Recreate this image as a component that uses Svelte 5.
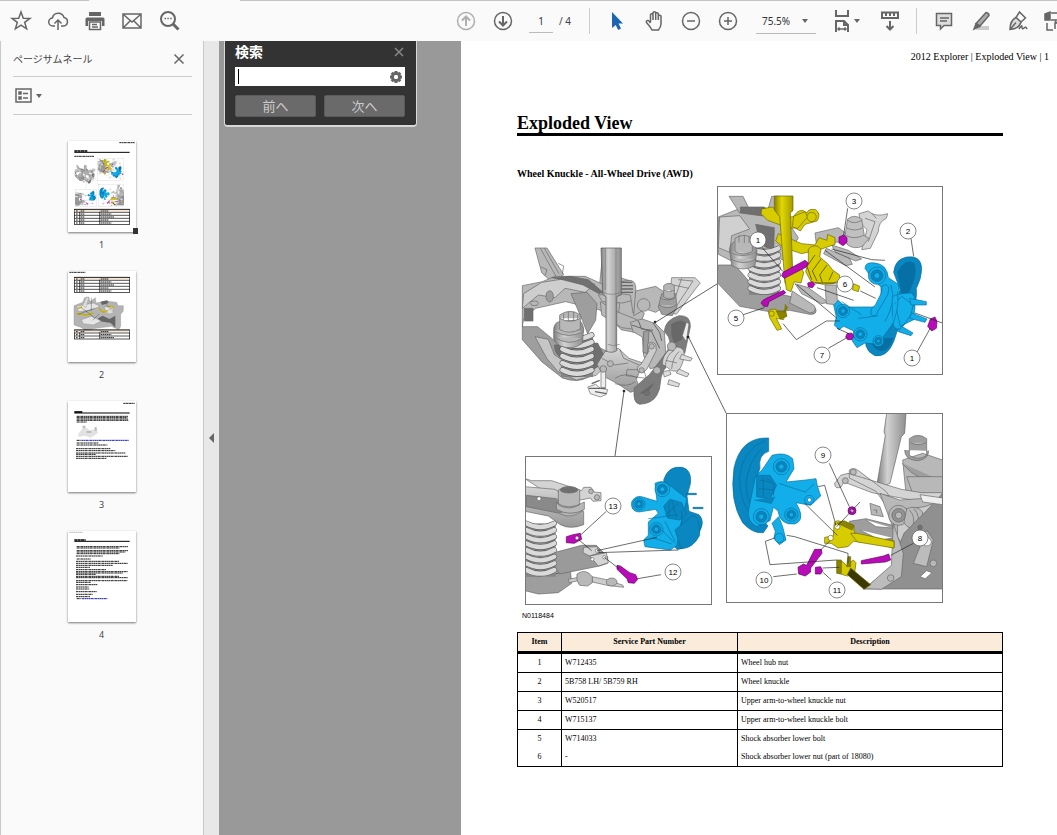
<script>
	let page = '1';
	let zoom = '75.5%';
	let query = '';

	const parts = [
		['1', 'W712435', 'Wheel hub nut'],
		['2', '5B758 LH/ 5B759 RH', 'Wheel knuckle'],
		['3', 'W520517', 'Upper arm-to-wheel knuckle nut'],
		['4', 'W715137', 'Upper arm-to-wheel knuckle bolt'],
		['5', 'W714033', 'Shock absorber lower bolt'],
		['6', '-', 'Shock absorber lower nut (part of 18080)']
	];

	// callout bubbles, in figure units
	const callouts = [
		{ n: '3', x: 339, y: 16 },
		{ n: '2', x: 393, y: 46 },
		{ n: '1', x: 243, y: 55 },
		{ n: '6', x: 330, y: 99 },
		{ n: '5', x: 221, y: 133 },
		{ n: '7', x: 307, y: 170 },
		{ n: '1', x: 397, y: 173 },
		{ n: '9', x: 308, y: 270 },
		{ n: '8', x: 405, y: 353 },
		{ n: '10', x: 249, y: 395 },
		{ n: '11', x: 322, y: 405 },
		{ n: '13', x: 98, y: 321 },
		{ n: '12', x: 158, y: 387 }
	];

	// text rows of the thumbnails: y, x, width, colour
	const rows3 = [
		[46, 26, 154], [50, 26, 152], [54, 26, 154], [58, 26, 156], [63, 26, 30],
		[118, 26, 12], [118, 40, 142, '#1a1ad0'], [126, 26, 66], [132, 26, 92],
		[143, 24, 104], [149, 24, 118], [156, 24, 148], [160, 24, 60], [166, 24, 156], [172, 24, 92]
	];
	const rows4 = [
		[47, 26, 154], [51, 26, 128], [59, 26, 154], [63, 26, 146], [68, 26, 128], [75, 24, 80],
		[84, 26, 42], [91, 24, 130], [97, 24, 156], [103, 24, 110], [109, 24, 42], [116, 24, 90],
		[122, 24, 156], [126, 24, 140], [130, 24, 60], [136, 24, 130], [140, 24, 156], [149, 24, 154],
		[154, 24, 44], [161, 24, 64], [168, 24, 38], [174, 24, 40], [182, 24, 62], [190, 24, 50],
		[197, 24, 42], [203, 26, 14], [203, 42, 76, '#1a1ad0']
	];
</script>

{#snippet spring(x, y, w, n, step)}
	<rect x={x - 4} {y} width={w + 8} height={n * step} fill="#858585" stroke="none" />
	{#each Array(n) as _, i}
		<path
			d="M{x} {y + i * step} q{w / 2} {step * 1.1} {w} 0"
			fill="none" stroke="#555" stroke-width={step * 0.8} stroke-linecap="round" />
		<path
			d="M{x} {y + i * step} q{w / 2} {step * 1.1} {w} 0"
			fill="none" stroke="#dadada" stroke-width={step * 0.64} stroke-linecap="round" />
	{/each}
{/snippet}

{#snippet bushing(x, y, r)}
	<circle cx={x} cy={y} {r} />
	<circle cx={x} cy={y} r={r * 0.68} class="shade" />
	<circle cx={x} cy={y} r={r * 0.34} />
{/snippet}

{#snippet thumbTable(y, count)}
	<rect x="19" {y} width="166" height={count * 9} fill="none" stroke="#000" stroke-width="2" />
	<path d="M35 {y}v{count * 9}M95 {y}v{count * 9}" stroke="#000" stroke-width="2" />
	<rect x="20" y={y + 1} width="164" height="6" fill="#f6e6d6" />
	{#each Array(count) as _, i}
		<path d="M19 {y + i * 9}H185" stroke="#000" stroke-width="2" />
		<path d="M24 {y + i * 9 + 5}h6M38 {y + i * 9 + 5}h12M98 {y + i * 9 + 5}h{24 + (i % 3) * 8}" stroke="#222" stroke-width="3" stroke-dasharray="5 1" />
	{/each}
{/snippet}

{#snippet lines(rows)}
	{#each rows as [y, x, w, colour]}
		<path d="M{x} {y}h{w}" stroke={colour ?? '#222'} stroke-width="3" stroke-dasharray="7 1 4 1" />
	{/each}
{/snippet}

<div class="app">
	<div class="tabs"><span></span><span></span></div>
	<header class="toolbar">
		<div class="tools files">
			<button aria-label="Star">
				<svg viewBox="0 0 24 24"><path d="M12 3l2.3 6.2 6.7.2-5.3 4 1.9 6.4-5.6-3.7-5.6 3.7 1.9-6.4-5.3-4 6.7-.2z" /></svg>
			</button>
			<button aria-label="Upload">
				<svg viewBox="0 0 24 24"><path d="M9 17H7a4 4 0 01-.6-8A6 6 0 0118 8.500a4.300 4.300 0 01-.5 8.500H15M12 21v-9.500M8.500 14.500l3.500-3.500 3.500 3.500" /></svg>
			</button>
			<button aria-label="Print">
				<svg viewBox="0 0 24 24"><path class="fill" stroke="none" d="M6 3h12v4H6zM4 8.500h16q1.500 0 1.500 1.500v7H19v-5H5v5H2.500v-7q0-1.500 1.500-1.500z" /><path d="M6.500 13h11v7.500h-11zM9 15.500h5M9 18h6" /></svg>
			</button>
			<button aria-label="Mail">
				<svg viewBox="0 0 24 24"><path d="M3 5h18v14H3zM4 6l8 7 8-7M4 18l6-6M20 18l-6-6" /></svg>
			</button>
			<button aria-label="Search">
				<svg viewBox="0 0 24 24"><circle cx="11" cy="10" r="7" stroke-width="2" /><path stroke-width="3" d="M16 15l5.500 5.500" /><path d="M7.500 9.500H9M10.300 9.500h1.500M13.200 9.500h1.500" /></svg>
			</button>
		</div>
		<div class="tools view">
			<button class="dim" aria-label="Previous page">
				<svg viewBox="0 0 24 24"><circle cx="12" cy="12" r="8.500" /><path stroke-width="2" d="M12 17V8M8 11.500l4-4 4 4" /></svg>
			</button>
			<button aria-label="Next page">
				<svg viewBox="0 0 24 24"><circle cx="12" cy="12" r="8.500" /><path stroke-width="2" d="M12 7v9M8 12.500l4 4 4-4" /></svg>
			</button>
			<input class="page-no" aria-label="Page number" bind:value={page} />
			<span class="total">/ 4</span>
			<span class="rule"></span>
			<button aria-label="Select">
				<svg viewBox="0 0 24 24"><path fill="#1c66b0" stroke="none" d="M7 3v16l3.700-3 2.500 5 2.800-1.400-2.500-5H18z" /></svg>
			</button>
			<button aria-label="Hand">
				<svg viewBox="0 0 24 24"><path d="M8.500 13V5.500q1.300-1.500 2.500 0V11M11 10V3.500q1.400-1.500 2.700 0V11M13.700 10V4.500q1.300-1.400 2.600 0V11M16.300 11V7q1.400-1.400 2.700 0v8q-.3 3.500-2.500 6H10q-1.500-3-5.500-7.500c-1-2 1.500-2.500 2.500-1.500l1.500 2" /></svg>
			</button>
			<button aria-label="Zoom out">
				<svg viewBox="0 0 24 24"><circle cx="12" cy="12" r="8.500" /><path d="M8 12h8" /></svg>
			</button>
			<button aria-label="Zoom in">
				<svg viewBox="0 0 24 24"><circle cx="12" cy="12" r="8.500" /><path d="M8 12h8M12 8v8" /></svg>
			</button>
			<div class="zoom">
				<select aria-label="Zoom level" bind:value={zoom}>
					<option>75.5%</option>
					<option>100%</option>
				</select>
				<i class="caret"></i>
			</div>
			<button class="wide" aria-label="Page fit">
				<svg viewBox="0 0 24 24"><path stroke-width="2" d="M6 1v6h12V1M6 23V12h8l4 4v7M14 12v4h4" /><path d="M8 20h8M9.500 18.500L8 20l1.500 1.500M14.500 18.500L16 20l-1.500 1.500" /></svg>
				<i class="caret"></i>
			</button>
			<button aria-label="Scroll mode">
				<svg viewBox="0 0 24 24"><path stroke-width="2" d="M4 3.500h16V9H4zM8 4v3M12 4v3M16 4v3" /><path stroke-width="2" d="M12 12v8M8.500 17l3.500 3.500 3.500-3.500" /></svg>
			</button>
			<span class="rule"></span>
			<button aria-label="Comment">
				<svg viewBox="0 0 24 24"><path fill="#ddd" d="M4.500 4.500h15v12H12L8.500 20v-3.500h-4z" /><path d="M8 9h9M8 12h7" /></svg>
			</button>
			<button aria-label="Highlight">
				<svg viewBox="0 0 24 24"><path fill="#ccc" stroke="none" d="M10 17h10v4H7z" /><path fill="#aaa" d="M17 3.500q3 .5 3 3L11 17l-4-2.500z" /><path class="fill" d="M7 15l3.500 2.500L5 20z" /></svg>
			</button>
			<button aria-label="Sign">
				<svg viewBox="0 0 24 24"><path fill="#ddd" d="M4 20.500c0-6 2-10 6-12l5 4.500c-1 4-5 7-11 7.500zM4 20.500l6-7" /><path d="M10 8.500L13.500 3l6 6-4.500 4" /><path d="M13 20q3-5 3-2t2 1 3 1" /></svg>
			</button>
			<button aria-label="Convert">
				<svg viewBox="0 0 24 24"><path class="fill" d="M2 5l5-2v8H2z" /><path d="M8 4h8v7H8M4 14v7h6M12 12l5 5M12 20v-6h6" /></svg>
			</button>
		</div>
	</header>

	<div class="body">
		<aside>
			<div class="side-head">
				<h2>ページサムネール</h2>
				<button aria-label="閉じる"><svg viewBox="0 0 12 12"><path d="M1.500 1.500l9 9M10.500 1.500l-9 9" /></svg></button>
			</div>
			<div class="side-options">
				<button aria-label="オプション">
					<svg viewBox="0 0 17 15"><path d="M1 1h15v13H1zM8 5.500h5M8 10h5" /><path class="fill" d="M4 4h2v2H4zM4 9h2v2H4z" /></svg>
					<i class="caret"></i>
				</button>
			</div>
			<nav>
				<a href="#page-1">
					<span class="sheet current">
						<svg viewBox="0 0 204 273">
							<path d="M154 5h46M19 46h60" stroke="#222" stroke-width="3" stroke-dasharray="7 1 4 1" />
							<path d="M19 30h40" stroke="#000" stroke-width="5" stroke-dasharray="9 1" />
							<path d="M19 34H185" stroke="#000" stroke-width="3" />
							<use href="#suspension" transform="translate(18 51) scale(.35 .35)" />
							{@render thumbTable(205, 5)}
						</svg>
					</span>
					1
				</a>
				<a href="#page-2">
					<span class="sheet">
						<svg viewBox="0 0 204 273">
							<path d="M4 4h48" stroke="#222" stroke-width="3" stroke-dasharray="7 1 4 1" />
							{@render thumbTable(19, 5)}
							<path fill="#b4b4b4" stroke="#888" d="M18 104l26-10 6-14 12-2 4 14 16-12 2 16 28-6 34 4 4 10 16 0v16l-8 10v36l-6 10-22-10-46 6-34 8-8-10-24-8z" />
							<path fill="#666" d="M90 142l14-8 20 10 18-10v36l-14-14-36-6zM98 92l20-4 4 8-20 6z" />
							<path fill="#e6e6e6" stroke="#777" d="M26 106l50-10 20 10-24 10-40 6zM40 146l30-10 30 14-24 12-30-4zM108 108l28 0v14l-20 6z" />
							<path fill="#ddd" stroke="#888" d="M44 104l12-26 6 2-8 30zM118 118l14-6 4 14-16 4z" />
							<path fill="none" stroke="#c5b100" stroke-width="4" d="M24 128l34 4 18-6M92 112l14 12 12-6M120 104l18 6M30 112l12-4" />
							<path stroke="#222" fill="none" d="M30 130l50-18M40 110l40 30M70 80v40M94 128l-20 20M110 96l20 20" />
							{@render thumbTable(177, 3)}
						</svg>
					</span>
					2
				</a>
				<a href="#page-3">
					<span class="sheet">
						<svg viewBox="0 0 204 273">
							<path d="M166 7h34" stroke="#222" stroke-width="3" stroke-dasharray="7 1" />
							<path d="M19 33h24" stroke="#000" stroke-width="5" />
							<path d="M19 36H185" stroke="#000" stroke-width="3" />
							<path fill="#e2e2e2" d="M30 100l14-18 12-2 8 8 22-4 4 12-12 8-10 6-18-6-18 4z" />
							<path fill="#bbb" d="M44 74h8v8h-8zM80 78h6v12h-6zM56 90h14v6H56z" />
							{@render lines(rows3)}
						</svg>
					</span>
					3
				</a>
				<a href="#page-4">
					<span class="sheet">
						<svg viewBox="0 0 204 273">
							<path d="M4 4h40" stroke="#999" stroke-width="2" stroke-dasharray="5 1" />
							<path d="M19 27h34" stroke="#000" stroke-width="5" stroke-dasharray="9 1" />
							<path d="M19 31H185" stroke="#000" stroke-width="3" />
							{@render lines(rows4)}
						</svg>
					</span>
					4
				</a>
			</nav>
		</aside>
		<button class="collapse" aria-label="パネルを閉じる"><i></i></button>

		<div class="gutter">
			<form class="find">
				<div class="find-head">
					<label for="find">検索</label>
					<button type="button" aria-label="閉じる"><svg viewBox="0 0 12 12"><path d="M2 2l8 8M10 2l-8 8" /></svg></button>
				</div>
				<div class="find-box">
					<i class="cursor"></i>
					<input id="find" bind:value={query} />
					<svg viewBox="0 0 14 14"><circle cx="7" cy="7" r="3.500" fill="none" stroke="#666" stroke-width="3" /><path stroke="#666" stroke-width="3" d="M7 1v2M7 11v2M1 7h2M11 7h2M2.700 2.700l1.500 1.500M9.800 9.800l1.500 1.500M2.700 11.300l1.500-1.500M9.800 4.200l1.500-1.500" /><circle cx="7" cy="7" r="2" fill="#fff" /></svg>
				</div>
				<div class="find-nav">
					<button type="button">前へ</button>
					<button type="button">次へ</button>
				</div>
			</form>
		</div>

		<main id="page-1">
			<p class="running">2012 Explorer | Exploded View | 1</p>
			<h1>Exploded View</h1>
			<h3>Wheel Knuckle - All-Wheel Drive (AWD)</h3>

			<figure>
				<svg class="drawing" viewBox="0 0 430 422" role="img" aria-label="Wheel knuckle exploded view">
					<defs>
						<linearGradient id="tube"><stop offset="0" stop-color="#808080" /><stop offset=".35" stop-color="#d2d2d2" /><stop offset="1" stop-color="#8e8e8e" /></linearGradient>
						<linearGradient id="gold"><stop offset="0" stop-color="#8a8200" /><stop offset=".4" stop-color="#e2d800" /><stop offset="1" stop-color="#a29a00" /></linearGradient>
						<linearGradient id="arm" x2="0" y2="1"><stop offset="0" stop-color="#d4d4d4" /><stop offset="1" stop-color="#989898" /></linearGradient>
						<clipPath id="clipTop"><rect x="9" y="6" width="673" height="561" /></clipPath>
						<clipPath id="clipRight"><rect x="20" y="11" width="648" height="566" /></clipPath>
						<clipPath id="clipLeft"><rect x="31" y="20" width="558" height="445" /></clipPath>
					</defs>
					<g id="suspension">
						<!-- assembled view -->
						<g transform="translate(0 50) scale(.33333)">
							<g class="grey">
								<path d="M60 39h36l50 80-36 22-30-28z" />
								<path d="M76 40l48 86M88 40l44 76M78 96l18 8-6 18M130 85l16 8-4 24" fill="none" />
								<path d="M22 275h46l60 50 120 10 60 30-90 62q-30 18-76 2L80 380 22 314z" class="mid" />
								<path d="M60 305l40 8 18 46 50 34 72 6 44-20-40 42-60 14-54-24-34-40z" fill="#c6c6c6" />
								<path d="M262 70l60 60 24 8 14 36-4 40 32 20-20 60-50-10-70-80z" />
								<path d="M22 152l60-12 38-16 90 0 50 22 54 60-6 58-56-40-100-24-90 20-36 32-4 24H22z" />
								<path d="M80 142l90-14 70 20-30 24-60-12-30 28-50-8-48 40 4-44z" fill="#cecece" />
								<path d="M110 128l56-4 54 10 44 38-12 4-48-26-62-16z" class="dark" />
								<path d="M168 176l48-4 30 34-4 50-24 40-16-40z" class="mid" />
								<ellipse cx="104" cy="184" rx="11" ry="17" class="mid" />
								<path d="M28 220h26v38H28z" class="dark" />
								<ellipse cx="58" cy="205" rx="12" ry="7" />
								<path d="M118 330q0 34 30 40l74 40q36-14 44-50l-18-36z" class="dark" />
								{@render spring(142, 300, 88, 6, 21)}
								<path d="M116 285q0-22 20-26l54-4q14 6 16 28l-4 42q-30 22-66 8-20-12-20-24z" fill="url(#tube)" />
								<path d="M134 240q32-22 62 0v42q-30 18-62 2zM116 286q44 30 90 2M120 306q40 30 82 4M134 250q32 18 62 0" />
								<path d="M146 236v18M160 230v28M176 230v28M188 240v14" />
								<path d="M256 200l50 30 60 24 24 20-10 12-60-8-60-38zM250 180l40-4 66-4 6 22-40 10-60-4z" />
								<path d="M318 140l22-4q20-2 22 20l4 70-12 8-8-54-30-4z" />
								<path d="M320 142h32M320 152h34M320 162h34M320 172h34" stroke-width="4" />
								<path d="M362 168l60-14 30 20 10 32-40 26-30-10-36 20z" />
								<circle cx="386" cy="210" r="19" />
								<path d="M470 128l70 0 16 16-16 20-56 74-22-8 16-36-12-30z" fill="#d4d4d4" />
								<path d="M490 134l44 4-50 76M476 150l46 10M500 130l-22 66" fill="none" />
								<path d="M440 176h42l4 40-14 26-32-4-10-22z" class="mid" />
								<path d="M446 152q16-14 32 0v34q-16 14-32 0zM434 188q24 14 48 0M432 210q26 16 52 0M448 166q14 8 30 0" fill="#b4b4b4" />
								<path d="M346 262l36-10 40 14 26 26 4 60-20 40-26 10-20-40-4-56-28-16z" />
								<path d="M350 270l60 20 24 50M370 258l10 24 34 4M386 296l12 60M414 264l20 28 6 26" fill="none" stroke-width="3" />
								<path d="M386 290l16-4-4 70-14-4z" class="mid" />
								<path d="M270 350l40-10 32 30 42 14-20 50 12 28-30 10-38-26-42-22-20-36z" fill="url(#arm)" />
								<path d="M260 370l40 20 40-6M300 430q30-20 66-2M300 446q40 12 60-6M314 342l12 28 46 20M336 404h50l8 26-60-8z" fill="none" />
								<circle cx="286" cy="386" r="9" />
								<path d="M258 39h61v140l-14 6v162q-16 10-32 0v-162l-10-6z" fill="url(#tube)" stroke="#555" />
								<path d="M271 39v126M303 39v296M264 172q26 12 52 0M278 328q16 8 36 0" fill="none" stroke="#777" />
								<path d="M448 290q2-36 44-48 36-2 34 34l-16 76-14 20-30 8q-28 26-30 64 0 18-10 36-14 26-52 28-22-4-16-50l46-40 50-66q24-34-6-62z" fill="#7c7c7c" />
								<path d="M470 268q30-18 42-4 0 30-12 50l-22 10-8-24zM376 474q22 6 40-30" fill="#686868" />
								<path d="M502 302l12-40 8 4-8 54z" fill="#eee" />
								<path d="M466 342q24-14 40 4 6 26-14 60-18 8-34-8l-16-10q0-28 24-46z" fill="#d4d4d4" />
								<path d="M478 346q-26 12-28 56M492 350q-20 18-22 52M452 376l34 8" fill="none" />
								<path d="M500 358l32 12-6 8-32-6zM492 402l30 14-6 10-32-12zM462 434l32 12-4 10-32-8zM444 410l20-4 4 12-20 8z" fill="#ddd" />
								<path d="M398 328q12-12 24 0l2 18-28 56q-14 18-28 6-4-14 10-20l24-40z" fill="#ccc" />
								<circle cx="410" cy="334" r="8" /><circle cx="380" cy="406" r="8" /><circle cx="470" cy="334" r="13" /><circle cx="426" cy="406" r="11" /><circle cx="396" cy="474" r="8" class="dark" />
								<path d="M258 402h14v56h-14zM218 456l24-8 14 12 22 4-4 14-18 8-30-10z" fill="#eee" />
								<circle cx="265" cy="402" r="10" />
								<path d="M230 446l24-10M222 460h50M240 470l34 6" stroke-width="4" />
							</g>
						</g>
						<g class="lead">
							<path d="M141 137L202 99M173 151L211 228M109 206L100 271" />
							<circle cx="140" cy="137" r="1" /><circle cx="173" cy="152" r="1" /><circle cx="109" cy="206" r="1" />
						</g>

						<!-- upper right box -->
						<g transform="translate(200) scale(.33333)" clip-path="url(#clipTop)">
							<rect x="9" y="6" width="673" height="561" fill="#fff" stroke="none" />
							<g class="grey">
								<path d="M10 240h50l60 70 130 30 52 30q6 20-18 18l-60-12-50 6-100-18-70-74z" class="mid" />
								<path d="M232 318l66 44q10 20-14 22l-60-30zM240 296l40 12 60 44-20 4-60-30z" />
								<path d="M10 96l60-24 80-4 60 30 40 60-40 70-60-30-60-10-40 40-40-20z" />
								<path d="M42 34h42l20 40-30 10zM170 34l20 0-14 60-20-10z" />
								<path d="M14 96l60-4 30 40-54 20-6 50-34-14z" fill="#d0d0d0" />
								<path d="M76 66h70l40 30-50-4-60-8zM122 118l56 10-2 70-40-20z" class="dark" />
								{@render spring(106, 190, 84, 7, 20)}
								<path d="M44 196q0-24 18-26l50-2 14 28-6 46q-36 20-70 0z" fill="url(#tube)" />
								<path d="M60 160q26-18 52 0v40q-26 14-52 0zM44 200q38 24 80 0M48 222q38 22 74 0M72 152v20M88 150v24M102 154v20" />
								<path d="M300 144l70-16 24 18-10 24-80 6zM334 190l70 30 8 18-20 4-66-36zM350 180l50 16 40 26-18 6-60-26zM330 300l34 0 4 60-34-4z" />
								<path d="M432 86l28-8q20 20 58 8l-4 14q-24 10-24 40l-24 50-26 4 16-60-20-20z" fill="#d4d4d4" />
								<path d="M450 100l30 10-20 60M470 84l14 16" fill="none" />
								<path d="M388 162l10-60q20-16 42 0l8 50 14 8-20 24q-24 10-44-4z" fill="#c0c0c0" />
								<path d="M398 106q20 14 42 0M394 128q24 14 50 0M390 150q28 16 58 0" fill="none" />
							</g>
							<g class="gold">
								<path d="M140 72l30-6 60 30 40-16 8 16-30 34-30-2-60-22-20-20zM236 94q20-30 40-10 4-14 26-10 18 14 4 34l-36 10-14 20-24-14z" />
								<path d="M190 146l70 30 40 4 12-22 24 8 2-18 22 10v20l-40 14-60 14-54-18-24-20z" />
								<circle cx="290" cy="96" r="14" />
								<path d="M178 33h56v44l-8 6 8 196-10 24-14-8-16-200-16-20z" fill="url(#gold)" />
								<path d="M280 192q20-20 38 0l-4 24 24 20 16 20 20 14 0 16-20 10-30 2-36-8-16-30 8-30z" />
								<path d="M300 210l-24 34 14 40M318 222l-26 36 14 30M336 240l-22 30 8 22M354 260l-12 26" fill="none" stroke-width="3" />
								<path d="M210 280l18-30 30-6 8 20-8 30-20-4-10 30-14-6z" />
								<path d="M416 296l18 8-4 16-18-6zM160 378q16-12 30 0l20 4-4 22-22-4 16 32-14 4-22-38z" />
								<circle cx="170" cy="386" r="8" />
								<path d="M184 378h28l4 16-20 8zM210 358l8 10-12 16" class="shade" />
							</g>
							<g class="blue">
								<path d="M536 262q4-40 40-46 42-6 44 34 0 30-16 60 4 40-18 90l-40 40-10 30q-20 48-56 42-44-20-20-76l60-60 36-60z" class="shade" />
								<path d="M548 260q26-42 50-24 10 32-14 80l-20 30zM470 462q0 30 30 36 24-4 34-40" class="deep" />
								<path d="M450 250q0-20 30-16 36 4 40 44l30 20 10 60-20 50-30 40-20 30-40-4-24 14-14-20 4-30-30-14-14 10-14-14 6-24-8-36 14-14 22 20 84 0 22-10v-50l-26-24z" />
								{@render bushing(486, 272, 26)}
								{@render bushing(436, 448, 20)}
								{@render bushing(384, 378, 20)}
								{@render bushing(490, 468, 16)}
								<path d="M500 304q16-12 22 6l-4 20-30 50q-6 22-20 8-2-20 12-26l20-40zM530 336q20-12 60-12l10 14-12 50-30 44q-24 4-24-20zM540 354l20-20 40 30-4 40-40 20z" />
								<path d="M584 340l50 10v10l-46 0zM590 384l46 18-6 10-46-12zM560 424l34 20-6 8-38-12zM528 300q16 50-18 110M548 320q6 60-22 110M430 400l60-8M380 350l60 40" />
							</g>
							<g class="bolt">
								<path d="M204 262l14-8 52-28 10 8-6 12-54 28-12 6-8-8zM144 346l10-6 52-24 6 8-50 26-4 14-12 0-8-10zM278 294l14-4 8 8-8 10-12-2zM372 156l14-6 10 8 0 14-12 10-12-8zM646 402l14-6 6 14-2 20-14 8-12-14zM396 446l14-2 6 10-6 10-12 0-6-8z" />
							</g>
							<g class="lead long">
								<path d="M398 70l-12 80M140 186l64 74M76 392l72-24M300 294h72M340 490l56-32M604 505l42-76M588 160l8 54M330 196l150 110M350 192l120 32 40 2M246 300l120 100M306 308l110 38M436 318l46 22M600 384l82 30M204 416l40 48 90-56 40 0M366 430l36 16" />
							</g>
						</g>

						<!-- lower right box -->
						<g transform="translate(205 225) scale(.33333)" clip-path="url(#clipRight)">
							<rect x="20" y="11" width="648" height="566" fill="#fff" stroke="none" />
							<g class="grey">
								<path d="M500 10h58l-4 60-10 10-34 140q-20 12-38-4l24-140-4-10z" fill="url(#tube)" />
								<path d="M548 150l60-20 60 20v120l-110-20z" />
								<path d="M568 86q26-20 52 0v50q-26 18-52 0zM554 120q0 30 38 32 34-4 34-30M546 160q50 60 122 54M564 200q40 40 104 40" class="mid" />
								<path d="M560 200h108v50l-90 0zM572 98q20 12 46 0" />
								<path d="M362 196l22-6 40 12 120 36 60 10 62 0v24l-80 0-130-24-84-32-10 16q-18 6-18-12zM388 180q14-10 30 4l80 60 40 60-20 10-50-70-80-40z" fill="#d4d4d4" />
								<circle cx="376" cy="212" r="9" /><circle cx="400" cy="186" r="9" />
								<path d="M450 280l30 10 10 30-36-6zM460 300h10v10M480 250l60 20 60-4 68 0v200l-68 70-74-60-6-120z" />
								<path d="M534 300l80-10 54-20v90l-40 60-10 50-40-20-46-70z" fill="#ccc" />
								{@render bushing(536, 316, 30)}
								<path d="M560 296q30-12 48 10 0 34-20 52-24 0-36-20z" />
								<path d="M568 300q20 20 10 50M582 296q20 20 10 56" fill="none" />
								<path d="M388 334l50-8 80 20 6 40-40 10-60-20-20 4-10-20zM438 330l30 20 50 4M420 360l60 30 40-6" class="mid" />
								<path d="M532 420l20-50 60-60 56-60v287H430l40-30 50-40z" fill="#909090" />
								<path d="M520 340l30 90-6 70-60 38-50-2 80-70zM580 460l40-100 20 30-20 80z" fill="#bcbcbc" />
								<path d="M610 386q18-10 24 8 0 14-16 14-14-4-8-22zM600 500l20-18 16 6-20 18z" fill="#fff" />
								<circle cx="600" cy="352" r="7" class="dark" /><circle cx="640" cy="460" r="10" /><circle cx="512" cy="504" r="10" />
								<path d="M600 254l68 10v20l-60-8z" fill="#eee" />
							</g>
							<g class="blue">
								<path d="M146 84q-84-4-104 90-14 100 26 164 30 34 62 30l14-20-36-44-8-60 20-70q-6-40 26-50z" class="shade" />
								<path d="M134 92q-66 26-76 110 0 80 52 140M130 112q-46 40-52 110 0 40 22 76" fill="none" />
								<path d="M106 200l20-20 30-44q40-12 62 10l4 30-24 40 60-6 30-4 4 22 10 30-30 28-44-8 10 20q14 34-14 44-44 4-50-40l-14-10-10 40-40 18q-30-16-24-50l6-30z" />
								{@render bushing(184, 170, 24)}
								{@render bushing(214, 314, 20)}
								{@render bushing(124, 320, 24)}
								<circle cx="268" cy="270" r="14" /><circle cx="268" cy="270" r="6" fill="#fff" />
								<path d="M176 220l80 26 26-24" fill="none" />
								<path d="M156 340l20-20 12 30 10 40-20 14-16-20 4-20z" />
								<path d="M110 196l40 0 20 30-20 40-40-6zM140 206q30 10 20 50M104 270l50 10 10-20" class="shade" />
								<path d="M120 210l34 8M116 236l44 4M130 200v60" fill="none" />
								<circle cx="178" cy="384" r="14" />
							</g>
							<g class="gold">
								<path d="M342 346q0-18 20-12l40 14v14l10 20 110 10v22l-60-14-62-6-16 16-30 4-20-14-20 0v-18l26-4z" />
								<path d="M392 370h20l110 24v20l-110-18zM352 458l14-4 14 12 20-16 8 8-4 30-22 10-28-8z" />
								<circle cx="352" cy="350" r="8" fill="#fff" /><circle cx="332" cy="384" r="8" fill="#fff" />
								<path d="M392 474l60 50-20 14-50-44z" fill="#3c3900" />
								<path d="M350 450h14v40h-14zM384 440l8 0v30h-12zM352 340l20-8 30 14-6 14z" class="shade" />
							</g>
							<g class="bolt">
								<circle cx="396" cy="302" r="12" /><circle cx="396" cy="302" r="5" fill="#fff" />
								<path d="M284 418l20 0 2 12-34 44 0 12-16 12-20-6-2-20 16-10 10 4zM424 452l66-14 16-6 6 18-16 6-72 6zM286 472l16-2 6 12-6 10-16 0z" />
							</g>
							<g class="lead long">
								<path d="M328 160l60 130M580 400l-68 36M160 500l70-8M334 510l-26-24M420 276L350 350M294 230l20-4 34 120M254 280l98 96M164 384l-28 10 14 70 200-14M200 376l24 4 160 50v30M330 392l-30 30M308 474l50-2" />
							</g>
						</g>

						<!-- lower left box -->
						<g transform="translate(0 265) scale(.33333)" clip-path="url(#clipLeft)">
							<rect x="31" y="20" width="558" height="445" fill="#fff" stroke="none" />
							<g class="grey">
								<path d="M30 86l20 6 60 0 90 30 6-10 22 0 10 14 20 2v24l-24 2-8-10-30 6-60 6z" fill="#d4d4d4" />
								<path d="M30 380l100-10 36-10 4 40-40 28-60 4-40-10zM30 350l100-20 30 10-30 30-60 10-40-4z" class="mid" />
								<path d="M110 310l90-24 44 0 34 34v20l-24 8-120 24-20-30z" fill="#9a9a9a" />
								<path d="M206 292l40-2 8 18-30 10-20-10zM224 318l50-10 6 30-30 10z" fill="#d4d4d4" />
								{@render spring(34, 220, 84, 8, 20)}
								<path d="M30 110l90 8 50 34 36 32v40q-40 16-70 0l-36-26-70-14z" fill="url(#arm)" />
								<path d="M34 136l90 10 30 30-20 14-100-20z" fill="#8a8a8a" />
								<path d="M130 120q32-22 64 0v44q-32 20-64 0zM124 158q36 26 84-2v22q-40 24-84 0zM136 192q34 16 68-10" />
								<ellipse cx="162" cy="120" rx="26" ry="9" class="dark" />
								<circle cx="246" cy="142" r="8" /><circle cx="228" cy="124" r="7" /><circle cx="72" cy="146" r="6" fill="#fff" /><circle cx="246" cy="302" r="5" fill="#fff" /><circle cx="268" cy="322" r="5" fill="#fff" /><circle cx="232" cy="328" r="5" fill="#fff" />
								<path d="M230 380l50 10 44 16 2 6-50-6-44-10zM160 388l30-6v10l-28 6z" fill="#ccc" />
								<path d="M186 372q20-14 36-2l10 10v18l-14 10-24-2q-12-14-8-34z" />
								<ellipse cx="290" cy="396" rx="16" ry="12" />
							</g>
							<g class="blue">
								<path d="M446 90q14-44 56-38 30 8 24 50l-10 36 6 46 30 10q20 20 0 54-30 50-66 50l-30-30 10-60z" class="shade" />
								<path d="M420 100q20-10 36 0l60 46-20 80-10 60-20 14-76-10-4-20 14-14 0-40 30-26-8-12-50 8q-26-2-22-30 10-20 30-16l46 14z" />
								{@render bushing(442, 118, 22)}
								{@render bushing(372, 162, 18)}
								{@render bushing(424, 238, 20)}
								<path d="M446 168l20-20 34 10 14 34-20 18-36-6z" class="shade" />
								<path d="M470 150l14 50M490 160l-40 36M440 240l40 40M462 150v50M500 180v90M400 206l90-12M410 262l60 20M450 214l30 60" fill="none" />
								<path d="M480 240l54-44q20 0 20 60-20 40-56 40zM514 130h30v4h-30zM534 172h30v4h-30z" class="shade" />
							</g>
							<g class="bolt">
								<path d="M154 260l20-6 22-4 4 18-22 12-24-2zM306 346l10 2 28 20 18 6 6 14-10 12-18-2-4-12-30-28z" />
								<circle cx="186" cy="264" r="6" fill="#fff" />
							</g>
							<g class="lead long">
								<path d="M274 184l-76 70M190 268l40 34M246 302l180-40M250 308l240-8M268 322l44 34M368 386l70-12" />
							</g>
						</g>

						<g class="frame">
							<rect x="202.500" y="1.500" width="225" height="188" />
							<rect x="211.500" y="228.500" width="216" height="189" />
							<rect x="10.500" y="271.500" width="186" height="148" />
						</g>
						<g class="callouts">
							{#each callouts as c}
								<circle cx={c.x} cy={c.y} r="8" />
								<text x={c.x} y={c.y + 3}>{c.n}</text>
							{/each}
						</g>
					</g>
				</svg>
				<figcaption>N0118484</figcaption>
			</figure>

			<table>
				<thead>
					<tr><th>Item</th><th>Service Part Number</th><th>Description</th></tr>
				</thead>
				<tbody>
					{#each parts as [item, number, description]}
						<tr><td>{item}</td><td>{number}</td><td>{description}</td></tr>
					{/each}
				</tbody>
			</table>
		</main>
	</div>
</div>

<style>
	:global(body) {
		background: #fafafa;
		overflow: hidden;
	}

	.app {
		display: flex;
		flex-direction: column;
		height: 100vh;
		font-family: 'Noto Sans', 'Noto Sans CJK JP', sans-serif;
		color: #444;
	}

	button {
		border: none;
		background: none;
		padding: 0;
		font: inherit;
		color: inherit;
	}

	.tabs {
		display: flex;
		gap: 151px;
		height: 1px;
	}

	.tabs span {
		width: 89px;
		background: #c4c4c4;
	}

	.tabs span:last-child {
		flex: 1;
	}

	.toolbar {
		display: flex;
		height: 40px;
		padding-left: 2px;
		overflow: hidden;
		background: #fafafa;
		font-size: 10px;
	}

	.tools {
		display: flex;
		align-items: center;
		flex: none;
	}

	.files {
		flex: 1;
	}

	.view {
		margin-right: -16px;
	}

	.tools button {
		display: flex;
		align-items: center;
		justify-content: center;
		flex: none;
		width: 37px;
		height: 40px;
	}

	.tools button svg {
		width: 24px;
		height: 24px;
		flex: none;
	}

	.tools svg,
	aside button svg,
	.find-head svg {
		fill: none;
		stroke: #666;
		stroke-width: 1.5;
	}

	.tools .fill,
	aside .fill {
		fill: #666;
	}

	.tools .dim {
		opacity: 0.5;
	}

	.page-no {
		box-sizing: border-box;
		width: 24px;
		height: 24px;
		margin-left: 8px;
		padding: 0;
		border: none;
		border-bottom: 1px solid #bbb;
		background: none;
		font: inherit;
		color: #333;
		text-align: center;
	}

	.total {
		width: 22px;
		margin-left: 6px;
	}

	.rule {
		width: 1px;
		height: 26px;
		margin: 0 8px;
		background: #ccc;
	}

	.zoom {
		display: flex;
		align-items: center;
		width: 60px;
		height: 24px;
		margin: 0 8px 0 10px;
		border-bottom: 1px solid #bbb;
	}

	.zoom select {
		appearance: none;
		flex: 1;
		min-width: 0;
		padding: 0 0 0 6px;
		border: none;
		background: none;
		font: inherit;
		color: #333;
	}

	.caret {
		flex: none;
		border: 3px solid transparent;
		border-top: 4px solid #666;
		border-bottom: none;
	}

	.zoom .caret {
		margin-right: 8px;
	}

	.tools .wide {
		width: 47px;
		justify-content: flex-start;
		padding-left: 6px;
	}

	.body {
		display: flex;
		flex: 1;
		min-height: 0;
	}

	aside {
		box-sizing: border-box;
		flex: none;
		width: 204px;
		padding: 0 11px 0 12px;
		border: solid #c8c8c8;
		border-width: 0 1px;
		background: #fafafa;
	}

	.side-head,
	.side-options {
		display: flex;
		align-items: center;
		justify-content: space-between;
		height: 35px;
		border-bottom: 1px solid #ccc;
	}

	.side-options {
		height: 37px;
	}

	.side-options button {
		display: flex;
		align-items: center;
		gap: 4px;
		padding-left: 2px;
	}

	.side-options svg {
		width: 17px;
		height: 15px;
	}

	h2 {
		margin: 0;
		font-size: 10px;
		font-weight: 400;
	}

	.side-head button {
		display: flex;
		padding-right: 7px;
	}

	.side-head svg {
		width: 12px;
		height: 12px;
	}

	nav {
		display: flex;
		flex-direction: column;
		align-items: center;
		gap: 17px;
		padding: 26px 2px 0 0;
	}

	nav a {
		display: flex;
		flex-direction: column;
		align-items: center;
		gap: 3px;
		color: #444;
		font-size: 9px;
		line-height: 19px;
		text-decoration: none;
	}

	.sheet {
		position: relative;
		width: 68px;
		height: 91px;
		background: #fff;
		box-shadow: 0 1px 2px #777;
	}

	.sheet svg {
		display: block;
		width: 100%;
		height: 100%;
	}

	.current::after {
		content: '';
		position: absolute;
		right: -2px;
		bottom: -2px;
		width: 5px;
		height: 6px;
		background: #333;
	}

	.collapse {
		display: flex;
		align-items: center;
		justify-content: center;
		flex: none;
		width: 15px;
		background: #e8e8e8;
	}

	.collapse i {
		border: 5px solid transparent;
		border-right-color: #666;
		border-left: none;
	}

	.gutter {
		flex: none;
		width: 232px;
		padding: 0 5px;
		background: #999;
	}

	.find {
		box-sizing: border-box;
		width: 193px;
		padding: 0 11px 8px 10px;
		border: solid #d8d8d8;
		border-width: 0 1px 2px;
		border-radius: 0 0 4px 4px;
		background: #333;
	}

	.find-head {
		display: flex;
		align-items: center;
		justify-content: space-between;
		height: 22px;
		padding-bottom: 4px;
	}

	.find-head label {
		color: #fff;
		font-size: 14px;
		line-height: 20px;
		font-weight: 700;
	}

	.find-head svg {
		display: block;
		width: 12px;
		height: 12px;
		stroke: #888;
	}

	.find-box {
		display: flex;
		align-items: center;
		height: 19px;
		padding: 0 2px 0 3px;
		background: #fff;
	}

	.cursor {
		width: 1px;
		height: 15px;
		background: #000;
	}

	.find-box input {
		flex: 1;
		min-width: 0;
		height: 15px;
		padding: 0;
		border: none;
		outline: none;
	}

	.find-box svg {
		width: 14px;
		height: 14px;
	}

	.find-nav {
		display: flex;
		gap: 8px;
		padding-top: 9px;
	}

	.find-nav button {
		flex: 1;
		height: 22px;
		border: 1px solid #5a5a5a;
		border-radius: 2px;
		background: #6a6a6a;
		color: #ccc;
		font-size: 13px;
		line-height: 18px;
	}

	main {
		flex: 1;
		min-width: 0;
		padding: 9px 54px 0 56px;
		background: #fff;
		color: #000;
		font-family: 'Liberation Serif', serif;
	}

	.running {
		margin: 0 -46px 0 0;
		font-size: 10px;
		line-height: 14px;
		text-align: right;
	}

	h1 {
		margin: 50px 0 0;
		border-bottom: 3px solid #000;
		font-size: 18px;
		line-height: 19px;
	}

	h3 {
		margin: 31px 0 0;
		font-size: 10px;
		line-height: 14px;
	}

	figure {
		margin: 4px 0 0 -2px;
	}

	.drawing {
		display: block;
		width: 430px;
		max-width: 100%;
	}

	figcaption {
		padding: 4px 0 0 7px;
		font: 7px/10px 'Liberation Sans', sans-serif;
	}

	.grey {
		fill: #b8b8b8;
		stroke: #666;
		stroke-width: 2;
	}

	.grey .mid {
		fill: #9e9e9e;
	}

	.grey .dark {
		fill: #707070;
	}

	.grey .shade {
		fill: #929292;
	}

	.gold {
		fill: #d6cc00;
		stroke: #6c6500;
		stroke-width: 2;
	}

	.gold .shade {
		fill: #8a8300;
	}

	.blue {
		fill: #12aeea;
		stroke: #07709f;
		stroke-width: 2;
	}

	.blue .shade {
		fill: #0a86c0;
	}

	.blue .deep {
		fill: #0670a4;
	}

	.bolt {
		fill: #b80cb8;
		stroke: #60005f;
		stroke-width: 2;
	}

	.lead {
		fill: none;
		stroke: #222;
		stroke-width: 0.7;
	}

	.lead circle {
		fill: #000;
	}

	.lead.long {
		stroke-width: 2;
	}

	.frame {
		fill: none;
		stroke: #777;
	}

	.callouts circle {
		fill: #fff;
		stroke: #555;
		stroke-width: 0.7;
	}

	.callouts text {
		font: 8px 'Liberation Sans', sans-serif;
		text-anchor: middle;
	}

	table {
		width: 100%;
		margin-top: 11px;
		border-collapse: collapse;
		table-layout: fixed;
		font-size: 8px;
		line-height: 10px;
	}

	th {
		height: 18px;
		padding: 0;
		border: 1px solid #000;
		border-bottom: 3px solid #000;
		background: #faebdb;
	}

	th:first-child {
		width: 43px;
	}

	th:nth-child(2) {
		width: 175px;
	}

	td {
		height: 18px;
		padding: 0 3px;
		border: 1px solid #000;
	}

	td:first-child {
		text-align: center;
	}

	tr:nth-last-child(2) td {
		border-bottom: none;
	}

	tr:last-child td {
		border-top: none;
	}
</style>
